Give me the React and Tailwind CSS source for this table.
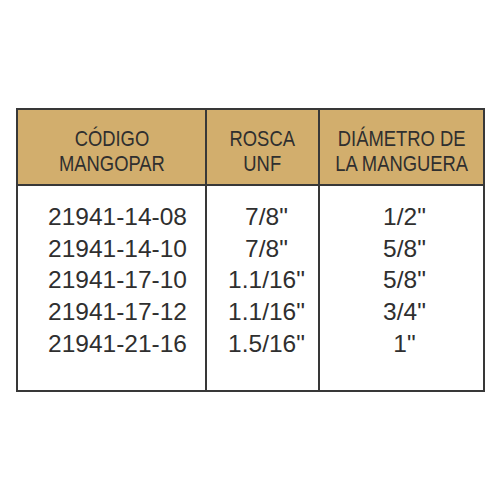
export default function App() {
  const rows = [
    ["21941-14-08", "7/8\"", "1/2\""],
    ["21941-14-10", "7/8\"", "5/8\""],
    ["21941-17-10", "1.1/16\"", "5/8\""],
    ["21941-17-12", "1.1/16\"", "3/4\""],
    ["21941-21-16", "1.5/16\"", "1\""],
  ];
  const font = { fontFamily: '"Liberation Sans", Arial, sans-serif' };
  return (
    <div className="w-[501px] h-[501px] bg-white pt-[108px] pl-[16px] text-[#2f2f2f]" style={font}>
      <div className="w-[469px] h-[284px] border-2 border-[#383838] flex flex-col">
        <div className="flex h-[76px] bg-[#d2ae6d] border-b-2 border-[#383838] text-[21.5px] leading-[25px]">
          <div className="w-[189px] border-r-2 border-[#383838] pt-[17px] flex flex-col items-center">
            <div className="scale-x-[0.855] text-center whitespace-nowrap">CÓDIGO<br />MANGOPAR</div>
          </div>
          <div className="w-[113px] border-r-2 border-[#383838] pt-[17px] flex flex-col items-center">
            <div className="scale-x-[0.855] text-center whitespace-nowrap">ROSCA<br />UNF</div>
          </div>
          <div className="flex-1 pt-[17px] flex flex-col items-center">
            <div className="scale-x-[0.855] text-center whitespace-nowrap">DIÁMETRO DE<br />LA MANGUERA</div>
          </div>
        </div>
        <div className="flex flex-1 text-[24.5px] leading-[31.7px]">
          <div className="w-[189px] border-r-2 border-[#383838] pt-[15px] pl-[12px] text-center">
            {rows.map((r) => <div key={r[0]}>{r[0]}</div>)}
          </div>
          <div className="w-[113px] border-r-2 border-[#383838] pt-[15px] pl-[8px] text-center">
            {rows.map((r) => <div key={r[0]}>{r[1]}</div>)}
          </div>
          <div className="flex-1 pt-[15px] pl-[6px] text-center">
            {rows.map((r) => <div key={r[0]}>{r[2]}</div>)}
          </div>
        </div>
      </div>
    </div>
  );
}
